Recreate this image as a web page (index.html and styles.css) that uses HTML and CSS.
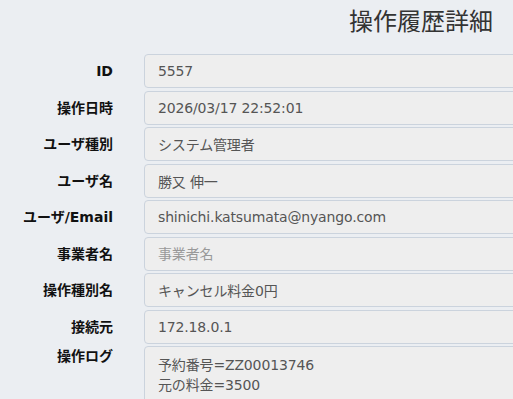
FILE: index.html
```html
<!DOCTYPE html>
<html lang="ja">

<head>
    <meta charset="UTF-8">
    <meta name="viewport" content="width=device-width, initial-scale=1.0">
    <title>操作履歴詳細</title>
    <link rel="stylesheet" href="styles.css">
</head>

<body>

    <div class="page-container">
        <h1 class="page-title">操作履歴詳細</h1>

        <form class="detail-form">
            <label for="logId">ID</label>
            <input type="text" id="logId" value="5557" readonly>

            <label for="operatedAt">操作日時</label>
            <input type="text" id="operatedAt" value="2026/03/17 22:52:01" readonly>

            <label for="userType">ユーザ種別</label>
            <input type="text" id="userType" value="システム管理者" readonly>

            <label for="userName">ユーザ名</label>
            <input type="text" id="userName" value="勝又 伸一" readonly>

            <label for="userEmail">ユーザ/Email</label>
            <input type="text" id="userEmail" value="shinichi.katsumata@nyango.com" readonly>

            <label for="companyName">事業者名</label>
            <input type="text" id="companyName" placeholder="事業者名" readonly>

            <label for="operationType">操作種別名</label>
            <input type="text" id="operationType" value="キャンセル料金0円" readonly>

            <label for="source">接続元</label>
            <input type="text" id="source" value="172.18.0.1" readonly>

            <label for="operationLog" class="top-label">操作ログ</label>
            <textarea id="operationLog" readonly>予約番号=ZZ00013746
元の料金=3500</textarea>
        </form>
    </div>

</body>

</html>
```

FILE: styles.css
```css
body {
    margin: 0;
    background-color: #ebeef2;
    font-family: "DejaVu Sans", "Noto Sans CJK JP", sans-serif;
}

.page-container {
    width: 513px;
    height: 399px;
    overflow: hidden;
}

.page-title {
    margin: 0;
    padding: 4px 20px 0 0;
    height: 50px;
    box-sizing: border-box;
    text-align: right;
    font-family: "Noto Sans CJK JP", sans-serif;
    font-size: 24px;
    font-weight: normal;
    line-height: 32px;
    color: #333;
}

.detail-form {
    display: grid;
    grid-template-columns: 113px 420px;
    column-gap: 31px;
    row-gap: 2.5px;
    padding-top: 4px;
}

label {
    text-align: right;
    font-family: "DejaVu Sans", "Noto Sans CJK JP", sans-serif;
    font-size: 14px;
    font-weight: bold;
    color: #111;
    line-height: 34px;
}

.top-label {
    line-height: 20px;
}

input,
textarea {
    box-sizing: border-box;
    margin: 0;
    height: 34px;
    padding: 6px 13px;
    font-family: "DejaVu Sans", "Noto Sans CJK JP", sans-serif;
    font-size: 14px;
    letter-spacing: -0.15px;
    color: #555;
    background-color: #eeeeee;
    border: 1px solid #cbd3dd;
    border-radius: 4px;
    outline: none;
}

input::placeholder {
    color: #999;
}

textarea {
    height: 90px;
    padding-top: 8px;
    line-height: 20px;
    resize: none;
}
```
